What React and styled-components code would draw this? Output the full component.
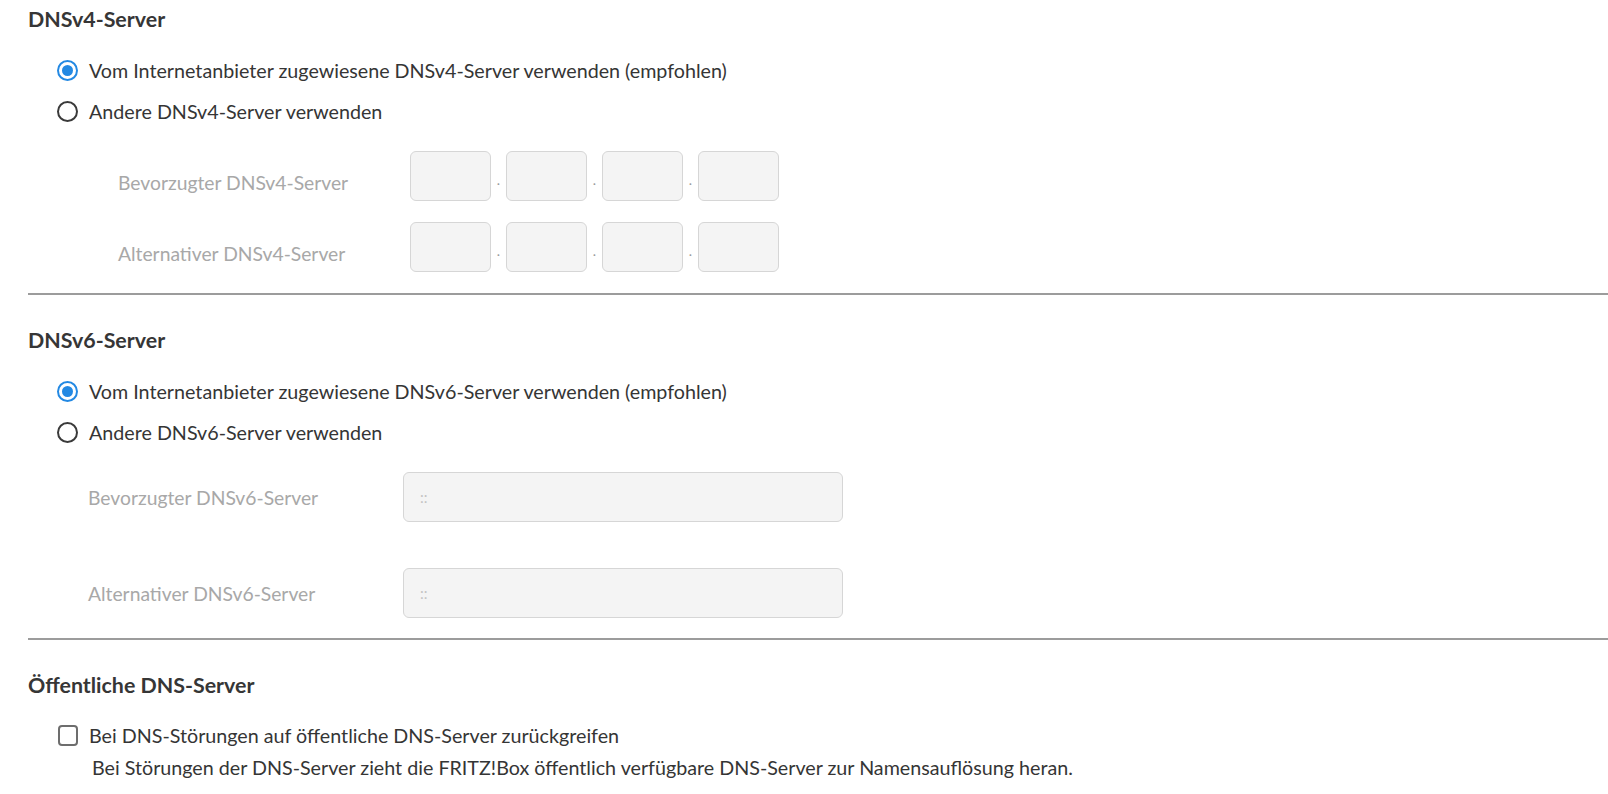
import React from 'react';
import styled, { createGlobalStyle } from 'styled-components';

const GlobalStyle = createGlobalStyle`
  html, body {
    margin: 0;
    padding: 0;
    background: #ffffff;
  }
  body {
    font-family: Lato, "Open Sans", sans-serif;
    color: #353535;
  }
`;

const Page = styled.div`
  padding: 0 0 0 28px;
`;

const Section = styled.section`
  padding: ${(p) => (p.first ? '7px' : '33px')} 0 ${(p) => (p.first ? '21px' : '20px')} 0;
  border-bottom: ${(p) => (p.last ? 'none' : '2px solid #9c9c9c')};
`;

const Heading = styled.h2`
  margin: 0;
  font-size: 21.4px;
  line-height: 24px;
  font-weight: 700;
  color: #363636;
`;

const OptionList = styled.div`
  display: flex;
  flex-direction: column;
  margin: 19px 0 0 29px;
`;

const OptionRow = styled.label`
  display: flex;
  align-items: center;
  gap: 11px;
  height: 41px;
  font-size: 19.7px;
  color: #353535;
`;

const RadioMark = styled.span`
  box-sizing: border-box;
  width: 21px;
  height: 21px;
  border-radius: 50%;
  border: 2px solid ${(p) => (p.checked ? '#2389e3' : '#3a3a3a')};
  display: flex;
  align-items: center;
  justify-content: center;

  &::after {
    content: '';
    width: 11px;
    height: 11px;
    border-radius: 50%;
    background: ${(p) => (p.checked ? '#2389e3' : 'transparent')};
  }
`;

const CheckMark = styled.span`
  box-sizing: border-box;
  width: 20px;
  height: 21px;
  border-radius: 4px;
  border: 2px solid #6d6d6d;
`;

const Fields = styled.div`
  display: grid;
  grid-template-columns: ${(p) => p.labelWidth}px auto;
  align-items: center;
  row-gap: ${(p) => p.rowGap}px;
  margin: 19px 0 0 ${(p) => p.indent}px;
`;

const FieldLabel = styled.span`
  font-size: 19.3px;
  color: #a8a8a8;
  padding-top: ${(p) => p.drop || 0}px;
`;

const OctetGroup = styled.div`
  display: flex;
  align-items: center;
`;

const Octet = styled.input`
  box-sizing: border-box;
  width: 81px;
  height: 50px;
  background: #f4f4f4;
  border: 1px solid #d6d6d6;
  border-radius: 6px;
  outline: none;
`;

const Dot = styled.span`
  width: 15px;
  text-align: center;
  font-size: 14px;
  line-height: 14px;
  color: #9a9a9a;
  padding-top: 8px;
`;

const WideInput = styled.input`
  box-sizing: border-box;
  width: 440px;
  height: 50px;
  padding: 0 16px;
  background: #f4f4f4;
  border: 1px solid #d6d6d6;
  border-radius: 6px;
  font-family: Lato, sans-serif;
  font-size: 15px;
  outline: none;

  &::placeholder {
    color: #c4c4c4;
  }
`;

const CheckBlock = styled.div`
  margin: 18px 0 0 30px;
`;

const Hint = styled.p`
  margin: 0 0 0 34px;
  font-size: 19.7px;
  line-height: 24px;
  color: #353535;
`;

const Radio = ({ checked, children }) => (
  <OptionRow>
    <RadioMark checked={checked} />
    {children}
  </OptionRow>
);

const Ipv4Field = () => (
  <OctetGroup>
    <Octet disabled />
    <Dot>.</Dot>
    <Octet disabled />
    <Dot>.</Dot>
    <Octet disabled />
    <Dot>.</Dot>
    <Octet disabled />
  </OctetGroup>
);

export default function App() {
  return (
    <Page>
      <GlobalStyle />
      <Section first>
        <Heading>DNSv4-Server</Heading>
        <OptionList>
          <Radio checked>Vom Internetanbieter zugewiesene DNSv4-Server verwenden (empfohlen)</Radio>
          <Radio>Andere DNSv4-Server verwenden</Radio>
        </OptionList>
        <Fields labelWidth={292} rowGap={21} indent={90}>
          <FieldLabel drop={12}>Bevorzugter DNSv4-Server</FieldLabel>
          <Ipv4Field />
          <FieldLabel drop={12}>Alternativer DNSv4-Server</FieldLabel>
          <Ipv4Field />
        </Fields>
      </Section>

      <Section>
        <Heading>DNSv6-Server</Heading>
        <OptionList>
          <Radio checked>Vom Internetanbieter zugewiesene DNSv6-Server verwenden (empfohlen)</Radio>
          <Radio>Andere DNSv6-Server verwenden</Radio>
        </OptionList>
        <Fields labelWidth={315} rowGap={46} indent={60}>
          <FieldLabel>Bevorzugter DNSv6-Server</FieldLabel>
          <WideInput disabled placeholder="::" />
          <FieldLabel>Alternativer DNSv6-Server</FieldLabel>
          <WideInput disabled placeholder="::" />
        </Fields>
      </Section>

      <Section last>
        <Heading>Öffentliche DNS-Server</Heading>
        <CheckBlock>
          <OptionRow>
            <CheckMark />
            Bei DNS-Störungen auf öffentliche DNS-Server zurückgreifen
          </OptionRow>
          <Hint>Bei Störungen der DNS-Server zieht die FRITZ!Box öffentlich verfügbare DNS-Server zur Namensauflösung heran.</Hint>
        </CheckBlock>
      </Section>
    </Page>
  );
}
